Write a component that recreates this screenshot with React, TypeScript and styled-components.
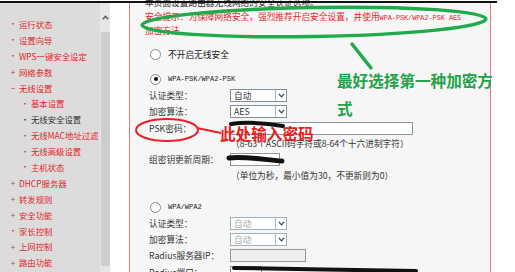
import React from "react";
import styled, { createGlobalStyle } from "styled-components";

const Global = createGlobalStyle`
  html, body { margin: 0; padding: 0; background: #fff; }
  body { font-family: "Noto Sans CJK SC", "Noto Sans", sans-serif; }
`;

const Screen = styled.div`
  position: relative;
  width: 515px;
  height: 272px;
  overflow: hidden;
  background: #fff;
  padding-top: 1px;
  box-sizing: border-box;
`;

const TopRule = styled.div`
  width: 497px;
  height: 2px;
  background: #111;
  position: relative;
  z-index: 2;
`;

const Body = styled.div`
  display: flex;
  height: 269px;
`;

const Sidebar = styled.nav`
  width: 100px;
  background: #dcdcdc;
  padding-top: 13px;
  box-sizing: border-box;
  overflow: hidden;
`;

const MenuItem = styled.div<{ $sub?: boolean; $active?: boolean }>`
  display: flex;
  align-items: center;
  height: 15.9px;
  padding-left: ${(p) => (p.$sub ? 21 : 9)}px;
  color: ${(p) => (p.$active ? "#333" : "#e3262d")};
  font-size: 8.4px;
  white-space: nowrap;
`;

const Bullet = styled.span`
  width: 8px;
  margin-right: 2px;
  text-align: center;
  font-size: 8px;
`;

const Scrollbar = styled.div`
  width: 10px;
  background: #e6e6e6;
  display: flex;
  flex-direction: column;
  align-items: center;
`;

const ScrollArrow = styled.div`
  height: 29px;
  display: flex;
  align-items: center;
  justify-content: center;
`;

const ScrollThumb = styled.div`
  width: 9px;
  height: 234px;
  background: #cdcdcd;
`;

const Gutter = styled.div`
  width: 19px;
  background: #fff;
`;

const Panel = styled.main`
  width: 362px;
  border-left: 1px solid #e27c7c;
  border-right: 1px solid #e27c7c;
  background: #f6f6f6;
  box-sizing: border-box;
  color: #222;
  font-size: 8.7px;
`;

const Intro = styled.div`
  margin-top: -6px;
  height: 12px;
  line-height: 12px;
  padding-left: 15px;
  color: #333;
`;

const Tip = styled.div`
  margin-top: 2px;
  padding-left: 15px;
  line-height: 12.5px;
  color: #e3262d;
`;

const Mono = styled.span<{ $size?: number }>`
  font-family: "Liberation Mono", "DejaVu Sans Mono", monospace;
  font-size: ${(p) => p.$size ?? 6.8}px;
`;

const Row = styled.div<{ $h: number; $mt?: number }>`
  display: flex;
  align-items: center;
  height: ${(p) => p.$h}px;
  margin-top: ${(p) => p.$mt ?? 0}px;
  white-space: nowrap;
`;

const RadioRow = styled(Row)`
  padding-left: 20px;
`;

const Radio = styled.span<{ $on?: boolean }>`
  width: 9px;
  height: 9px;
  border-radius: 50%;
  border: 1px solid #8a8a8a;
  background: #fff;
  margin-right: 7px;
  display: flex;
  align-items: center;
  justify-content: center;
  &::after {
    content: "";
    width: 4px;
    height: 4px;
    border-radius: 50%;
    background: ${(p) => (p.$on ? "#111" : "transparent")};
  }
`;

const Label = styled.span`
  width: 100px;
  padding-left: 19px;
  box-sizing: border-box;
  color: #333;
`;

const Hint = styled.span`
  padding-left: 101px;
  color: #333;
`;

const SelectBox = styled.div<{ $off?: boolean }>`
  width: 57px;
  height: 13px;
  box-sizing: border-box;
  border: 1px solid ${(p) => (p.$off ? "#9fb0bf" : "#7f8f9c")};
  background: #fff;
  display: flex;
  align-items: center;
  justify-content: space-between;
  padding-left: 3px;
  color: ${(p) => (p.$off ? "#a8a8a8" : "#333")};
`;

const DropButton = styled.span`
  width: 11px;
  height: 11px;
  box-sizing: border-box;
  border-left: 1px solid #a9b7c3;
  display: flex;
  align-items: center;
  justify-content: center;
`;

const TextBox = styled.div<{ $w: number; $off?: boolean }>`
  width: ${(p) => p.$w}px;
  height: 13px;
  box-sizing: border-box;
  border: 1px solid #8c98a2;
  background: ${(p) => (p.$off ? "#eeeeee" : "#fff")};
`;

const Annotations = styled.svg`
  position: absolute;
  left: 0;
  top: 0;
  pointer-events: none;
`;

const Callout = styled.div<{ $color: string; $x: number; $y: number; $w: number }>`
  position: absolute;
  left: ${(p) => p.$x}px;
  top: ${(p) => p.$y}px;
  width: ${(p) => p.$w}px;
  color: ${(p) => p.$color};
  font-size: 15.6px;
  font-weight: 700;
  line-height: 28px;
  font-family: "Noto Sans CJK SC", sans-serif;
`;

const menu: { text: string; mark: string; sub?: boolean; active?: boolean }[] = [
  { text: "运行状态", mark: "•" },
  { text: "设置向导", mark: "•" },
  { text: "WPS一键安全设定", mark: "•" },
  { text: "网络参数", mark: "+" },
  { text: "无线设置", mark: "−" },
  { text: "基本设置", mark: "•", sub: true },
  { text: "无线安全设置", mark: "•", sub: true, active: true },
  { text: "无线MAC地址过滤", mark: "•", sub: true },
  { text: "无线高级设置", mark: "•", sub: true },
  { text: "主机状态", mark: "•", sub: true },
  { text: "DHCP服务器", mark: "+" },
  { text: "转发规则", mark: "+" },
  { text: "安全功能", mark: "+" },
  { text: "家长控制", mark: "•" },
  { text: "上网控制", mark: "+" },
  { text: "路由功能", mark: "+" },
];

function Chevron() {
  return (
    <svg width="7" height="5" viewBox="0 0 7 5">
      <path d="M0.8 0.8 L3.5 3.8 L6.2 0.8" fill="none" stroke="#444" strokeWidth="1.2" />
    </svg>
  );
}

function Select({ value, off }: { value: string; off?: boolean }) {
  return (
    <SelectBox $off={off}>
      {value}
      <DropButton>
        <Chevron />
      </DropButton>
    </SelectBox>
  );
}

export default function App() {
  return (
    <Screen>
      <Global />
      <TopRule />
      <Body>
        <Sidebar>
          {menu.map((m) => (
            <MenuItem key={m.text} $sub={m.sub} $active={m.active}>
              <Bullet>{m.mark}</Bullet>
              {m.text}
            </MenuItem>
          ))}
        </Sidebar>
        <Scrollbar>
          <ScrollArrow>
            <svg width="7" height="5" viewBox="0 0 7 5">
              <path d="M0.8 4.2 L3.5 1.2 L6.2 4.2" fill="none" stroke="#555" strokeWidth="1.4" />
            </svg>
          </ScrollArrow>
          <ScrollThumb />
        </Scrollbar>
        <Gutter />
        <Panel>
          <Intro>本页面设置路由器无线网络的安全认证选项。</Intro>
          <Tip>
            安全提示：为保障网络安全，强烈推荐开启安全设置，并使用<Mono>WPA-PSK/WPA2-PSK AES</Mono>
            <br />
            加密方法。
          </Tip>
          <RadioRow $h={16} $mt={9}>
            <Radio />
            不开启无线安全
          </RadioRow>
          <RadioRow $h={16} $mt={9}>
            <Radio $on />
            <Mono $size={7}>WPA-PSK/WPA2-PSK</Mono>
          </RadioRow>
          <Row $h={16}>
            <Label>认证类型：</Label>
            <Select value="自动" />
          </Row>
          <Row $h={17}>
            <Label>加密算法：</Label>
            <Select value="AES" />
          </Row>
          <Row $h={17}>
            <Label>PSK密码：</Label>
            <TextBox $w={183} />
          </Row>
          <Row $h={12}>
            <Hint>（8-63个ASCII码字符或8-64个十六进制字符）</Hint>
          </Row>
          <Row $h={20}>
            <Label>组密钥更新周期：</Label>
            <TextBox $w={50} />
          </Row>
          <Row $h={12}>
            <Hint>（单位为秒，最小值为30，不更新则为0）</Hint>
          </Row>
          <RadioRow $h={16} $mt={18}>
            <Radio />
            <Mono $size={7}>WPA/WPA2</Mono>
          </RadioRow>
          <Row $h={17}>
            <Label>认证类型：</Label>
            <Select value="自动" off />
          </Row>
          <Row $h={15}>
            <Label>加密算法：</Label>
            <Select value="自动" off />
          </Row>
          <Row $h={17}>
            <Label>Radius服务器IP：</Label>
            <TextBox $w={76} $off />
          </Row>
          <Row $h={16}>
            <Label>Radius端口：</Label>
            <TextBox $w={32} />
          </Row>
        </Panel>
      </Body>

      <Annotations width="515" height="272" viewBox="0 0 515 272">
        <ellipse
          cx="314"
          cy="22"
          rx="172"
          ry="14.5"
          transform="rotate(-1 314 22)"
          fill="none"
          stroke="#1faa4c"
          strokeWidth="3.5"
        />
        <path d="M352 44 L371 68" stroke="#1faa4c" strokeWidth="3.5" strokeLinecap="round" />
        <ellipse cx="167" cy="130" rx="31" ry="11" fill="none" stroke="#e8202a" strokeWidth="2" />
        <path d="M197 128 L221 133" stroke="#e8202a" strokeWidth="2" />
        <path d="M231 124 C245 122 265 123 283 126" stroke="#111" strokeWidth="4" fill="none" strokeLinecap="round" />
        <path d="M229 158 C245 156 265 160 282 161" stroke="#111" strokeWidth="5" fill="none" strokeLinecap="round" />
        <path d="M234 268 C290 269 360 270 416 271" stroke="#111" strokeWidth="4" fill="none" strokeLinecap="round" />
      </Annotations>
      <Callout $color="#22a34a" $x={337} $y={66} $w={160}>
        最好选择第一种加密方式
      </Callout>
      <Callout $color="#e62020" $x={220} $y={119} $w={110}>
        此处输入密码
      </Callout>
    </Screen>
  );
}
